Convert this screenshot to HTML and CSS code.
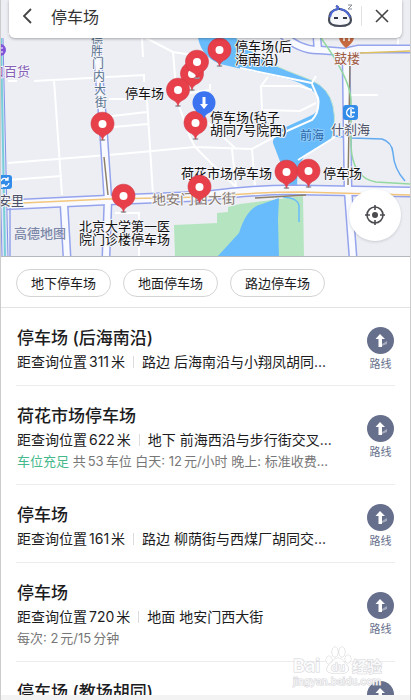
FILE: index.html
```html
<!DOCTYPE html>
<html lang="zh-CN">
<head>
    <meta charset="UTF-8">
    <meta name="viewport" content="width=device-width, initial-scale=1.0">
    <title>停车场</title>
    <link rel="stylesheet" href="styles.css">
</head>
<body>
    <div class="page">
        <div class="map-section">
            <svg class="map" viewBox="0 0 411 256" preserveAspectRatio="xMidYMid slice">
                <defs>
                    <g id="pin">
                        <ellipse cx="0" cy="16" rx="3" ry="1" fill="#9a9aa2"/>
                        <path d="M0 16C-1 12-3 11-6 9.500A11.500 11.500 0 1 1 6 9.500C3 11 1 12 0 16Z" fill="#e8404b" stroke="#cf3541" stroke-width=".6"/>
                        <circle r="4" fill="#fff"/>
                    </g>
                </defs>
                <rect width="411" height="257" fill="#eceef4"/>

                <!-- parks and lakes -->
                <path d="M174 225L217 223V213L228 212V207L240 204L303 196L304 257H175Z" fill="#b5e5c0"/>
                <path d="M217 257L239 233Q247 207 262 204L279 198L278 220L279 257Z" fill="#68bcfc"/>
                <path d="M283 197Q300 198 299 208V222" fill="none" stroke="#68bcfc" stroke-width="1.500"/>
                <path d="M198 38Q202 57 220 64L246 70L288 79Q312 86 319 98Q321 112 310 116L286 127Q272 133 273 143L281 164L290 186H297L298 166L306 154L331 140Q337 126 333 106Q329 88 311 80L288 71Q258 60 236 38Z" fill="#68bcfc"/>
                <path d="M236 38Q258 60 288 71L311 80Q329 88 333 106Q337 126 331 140" fill="none" stroke="#c6e6cf" stroke-width="1"/>
                <path d="M335 136L352 138L382 139Q392 142 393 153Q394 169 405 181" fill="none" stroke="#62aaf0" stroke-width="1.500"/>

                <!-- small streets -->
                <g class="street">
                    <path d="M8 34L20 31M8 81L17 81M34 81L144 75V82M54 80L62 195M142 38L143 57M146 38L173 52L205 57"/>
                    <path d="M173 52L177 100L190 137L195 147L210 162L236 187M8 163L120 154L195 147L252 149L278 135L312 120Q320 112 318 98L312 84"/>
                    <path d="M109 99H145M112 116L147 112M113 127L148 124M147 100L153 195M8 180L62 176M190 93L210 90V84"/>
                    <path d="M240 68L312 83L316 76M268 77L261 86L262 110L300 111L316 103M262 86L300 86L312 90"/>
                    <path d="M232 149L236 187M252 149L255 188M298 160L335 137M398 46V38M378 95L344 95M115 213H139V257M205 120L236 149"/>
                </g>

                <!-- main roads -->
                <g class="road-edge">
                    <path d="M96 38L103 124L108 200L106 257"/>
                    <path d="M64 205L67 257"/>
                    <path d="M346 50L348 190L353 257"/>
                    <path d="M282 34Q300 51 320 50L345 52L358 49L411 49"/>
                    <path d="M317 38L318 50"/>
                    <path class="wide" d="M0 205L108 200L205 196Q260 189 300 190L411 192"/>
                </g>
                <g class="road-fill">
                    <path d="M96 38L103 124L108 200L106 257"/>
                    <path d="M64 205L67 257"/>
                    <path d="M346 50L348 190L353 257"/>
                    <path d="M282 34Q300 51 320 50L345 52L358 49L411 49"/>
                    <path d="M317 38L318 50"/>
                    <path class="wide" d="M0 205L108 200L205 196Q260 189 300 190L411 192"/>
                </g>
                <g fill="none" stroke-width="1.500">
                    <path d="M0 204L108 199L205 197Q260 192 300 192L411 195" stroke="#f2c67c"/>
                    <path d="M360 53L411 51" stroke="#dfc160"/>
                    <path d="M350 60L348 185M104 157L108 195M255 198L306 195" stroke="#8d8068"/>
                    <path d="M321 38Q350 78 351 100V145Q352 178 376 182L411 184" stroke="#93d8a0"/>
                </g>

                <!-- ring road on the left edge -->
                <path d="M0 38L5 257" fill="none" stroke="#8492e6" stroke-width="7"/>
                <path d="M0 38L5 257" fill="none" stroke="#dfe6f7" stroke-width="5"/>
                <path d="M1 38L5 257" fill="none" stroke="#79cfd8" stroke-width="2"/>
                <path d="M10 257V208" fill="none" stroke="#95a3ec" stroke-width="1.500"/>

                <!-- places -->
                <circle cx="0" cy="50" r="6" fill="#8053d8"/>
                <path d="M0 48H3M0 52H3" stroke="#fff"/>
                <text class="place purple" x="-9" y="76">口百货</text>
                <rect x="-2" y="175" width="14" height="14" rx="3" fill="#328ce8"/>
                <path d="M1 181A4 4 0 0 1 8 180M9 183A4 4 0 0 1 2 185M8 177V180H5M2 188V185H5" fill="none" stroke="#fff" stroke-width="1.300"/>
                <text class="place" x="-2" y="205">安里</text>
                <text class="place road-name"><tspan x="91" y="44">德</tspan><tspan x="91" y="56">胜</tspan><tspan x="92" y="68">门</tspan><tspan x="93" y="81">内</tspan><tspan x="94" y="94">大</tspan><tspan x="95" y="107">街</tspan></text>
                <text class="place road-brown" x="152" y="205" transform="rotate(-1 152 205)">地安门西大街</text>
                <path d="M339 38H354Q353 43 346 48Q340 43 339 38Z" fill="#c66a41"/>
                <path d="M344 41V38M349 41V38" stroke="#fff" stroke-width="1.500"/>
                <text class="place brown" x="334" y="63">鼓楼</text>
                <rect x="343" y="105" width="15" height="15" rx="3" fill="#328ce8"/>
                <path d="M354 109A4.500 4.500 0 1 0 354 116M351 109V116M351 112.500H355" fill="none" stroke="#fff" stroke-width="1.500"/>
                <text class="place" x="331" y="134">什刹海</text>
                <text class="place water" x="300" y="140">前海</text>
                <text class="map-brand" x="14" y="238">高德地图</text>

                <!-- parking labels -->
                <g class="parking">
                    <text x="235" y="51">停车场(后</text>
                    <text x="235" y="64">海南沿)</text>
                    <text x="125" y="98">停车场</text>
                    <text x="210" y="122">停车场(毡子</text>
                    <text x="210" y="135">胡同7号院西)</text>
                    <text x="181" y="178">荷花市场停车场</text>
                    <text x="323" y="178">停车场</text>
                    <text x="79" y="231">北京大学第一医</text>
                    <text x="79" y="244">院门诊楼停车场</text>
                </g>

                <use href="#pin" x="219.500" y="50"/>
                <use href="#pin" x="192" y="74"/>
                <use href="#pin" x="197" y="62"/>
                <use href="#pin" x="178" y="90"/>
                <use href="#pin" x="195.500" y="123"/>
                <use href="#pin" x="102.500" y="124"/>
                <use href="#pin" x="123.500" y="196"/>
                <use href="#pin" x="199.500" y="187"/>
                <use href="#pin" x="286.500" y="172"/>
                <use href="#pin" x="308.500" y="171"/>
                <g transform="translate(204 103)">
                    <path d="M0 16C-1 12-3 11-6 9.500A11.500 11.500 0 1 1 6 9.500C3 11 1 12 0 16Z" fill="#3b73f0"/>
                    <path d="M-1.500-6H1.500V1H4L0 6L-4 1H-1.500Z" fill="#fff"/>
                </g>
            </svg>

            <header class="search-bar">
                <button class="icon-button" aria-label="返回">
                    <svg width="12" height="18" viewBox="0 0 12 18"><path d="M10 2L3 9L10 16" fill="none" stroke="#444" stroke-width="1.800"/></svg>
                </button>
                <input class="search-input" type="text" value="停车场" aria-label="搜索">
                <button class="icon-button" aria-label="语音助手">
                    <svg width="28" height="26" viewBox="0 0 28 26">
                        <path d="M12 6Q13 4 10 3M12 6Q3 7 3 17Q3 23 14 23Q25 23 25 17Q24 8 14 6Z" fill="#f7f8fb" stroke="#454a57" stroke-width="2.200"/>
                        <path d="M10 3Q13 4 12 6Q5 7 4 14M14 6Q21 7 24 14" fill="none" stroke="#4c68d6" stroke-width="2"/>
                        <path d="M8 15H12M17 15H21" stroke="#34394a" stroke-width="1.800"/>
                        <path d="M22 2H26L22 6H26" fill="none" stroke="#858994"/>
                    </svg>
                </button>
                <span class="bar-divider"></span>
                <button class="icon-button" aria-label="关闭">
                    <svg width="16" height="16" viewBox="0 0 16 16"><path d="M2 2L14 14M14 2L2 14" stroke="#444" stroke-width="1.600"/></svg>
                </button>
            </header>

            <button class="locate" aria-label="定位">
                <svg width="22" height="22" viewBox="0 0 22 22">
                    <circle cx="11" cy="11" r="8" fill="none" stroke="#4b4b50" stroke-width="1.600"/>
                    <circle cx="11" cy="11" r="3" fill="#4b4b50"/>
                    <path d="M11 1V6M11 16V21M1 11H6M16 11H21" stroke="#4b4b50" stroke-width="1.600"/>
                </svg>
            </button>
        </div>

        <nav class="filters">
            <button class="chip">地下停车场</button>
            <button class="chip">地面停车场</button>
            <button class="chip">路边停车场</button>
        </nav>

        <main class="results">
            <article class="result">
                <div class="info">
                    <h2>停车场 (后海南沿)</h2>
                    <p class="summary"><span>距查询位置<span class="num">311</span>米</span><span class="address">路边 后海南沿与小翔凤胡同...</span></p>
                </div>
                <a href="#" class="route">
                    <svg width="27" height="27" viewBox="0 0 27 27"><circle cx="13.500" cy="13.500" r="13.500" fill="#666f8b"/><path d="M15 17L20 14V17L15 19Z" fill="#a4aabc"/><path d="M13 7L18 12H15V20H11.500V12H8.500Z" fill="#fff"/></svg>
                    <span>路线</span>
                </a>
            </article>
            <article class="result">
                <div class="info">
                    <h2>荷花市场停车场</h2>
                    <p class="summary"><span>距查询位置<span class="num">622</span>米</span><span class="address">地下 前海西沿与步行街交叉...</span></p>
                    <p class="price"><span class="enough">车位充足</span> 共<span class="num">53</span>车位 白天: 12<span class="unit">元/小时</span> 晚上: 标准收费...</p>
                </div>
                <a href="#" class="route">
                    <svg width="27" height="27" viewBox="0 0 27 27"><circle cx="13.500" cy="13.500" r="13.500" fill="#666f8b"/><path d="M15 17L20 14V17L15 19Z" fill="#a4aabc"/><path d="M13 7L18 12H15V20H11.500V12H8.500Z" fill="#fff"/></svg>
                    <span>路线</span>
                </a>
            </article>
            <article class="result">
                <div class="info">
                    <h2>停车场</h2>
                    <p class="summary"><span>距查询位置<span class="num">161</span>米</span><span class="address">路边 柳荫街与西煤厂胡同交...</span></p>
                </div>
                <a href="#" class="route">
                    <svg width="27" height="27" viewBox="0 0 27 27"><circle cx="13.500" cy="13.500" r="13.500" fill="#666f8b"/><path d="M15 17L20 14V17L15 19Z" fill="#a4aabc"/><path d="M13 7L18 12H15V20H11.500V12H8.500Z" fill="#fff"/></svg>
                    <span>路线</span>
                </a>
            </article>
            <article class="result">
                <div class="info">
                    <h2>停车场</h2>
                    <p class="summary"><span>距查询位置<span class="num">720</span>米</span><span class="address">地面 地安门西大街</span></p>
                    <p class="price">每次: 2<span class="unit">元/15</span><span class="unit">分钟</span></p>
                </div>
                <a href="#" class="route">
                    <svg width="27" height="27" viewBox="0 0 27 27"><circle cx="13.500" cy="13.500" r="13.500" fill="#666f8b"/><path d="M15 17L20 14V17L15 19Z" fill="#a4aabc"/><path d="M13 7L18 12H15V20H11.500V12H8.500Z" fill="#fff"/></svg>
                    <span>路线</span>
                </a>
            </article>
            <article class="result">
                <div class="info">
                    <h2>停车场 (教场胡同)</h2>
                    <p class="summary"></p>
                </div>
                <a href="#" class="route" aria-label="路线">
                    <svg width="27" height="27" viewBox="0 0 27 27"><circle cx="13.500" cy="13.500" r="13.500" fill="#666f8b"/><path d="M15 17L20 14V17L15 19Z" fill="#a4aabc"/><path d="M13 7L18 12H15V20H11.500V12H8.500Z" fill="#fff"/></svg>
                </a>
            </article>

            <svg class="watermark" width="92" height="46" viewBox="0 0 92 46">
                <g class="mark">
                    <text class="mark-name" x="1" y="29">Bai</text>
                    <ellipse cx="37" cy="17" rx="3" ry="4"/>
                    <ellipse cx="43" cy="9" rx="3" ry="5"/>
                    <ellipse cx="50" cy="9" rx="3" ry="5"/>
                    <ellipse cx="56" cy="16" rx="3" ry="4"/>
                    <path d="M46 15Q50 15 52 19Q58 24 56 28Q54 31 46 30Q38 31 35 28Q34 23 40 19Q42 15 46 15Z"/>
                    <text class="mark-du" x="39" y="28">du</text>
                    <text class="mark-cn" x="60" y="29">经验</text>
                    <text class="mark-url" x="1" y="42">jingyan.baidu.com</text>
                </g>
            </svg>
        </main>
        <div class="bottom-strip"></div>
    </div>
</body>
</html>
```
FILE: styles.css
```css
* {
    box-sizing: border-box;
}
body {
    margin: 0;
    background: #fff;
    color: #1c1c1e;
    font-family: Inter, "Noto Sans CJK SC", sans-serif;
}
button {
    font-family: inherit;
    color: inherit;
    cursor: pointer;
}
.page {
    display: flex;
    flex-direction: column;
    height: 100vh;
    border-left: 1px solid #ccc;
    border-right: 1px solid #ccc;
    overflow: hidden;
}

/* map */
.map-section {
    position: relative;
    flex: none;
    border-bottom: 1px solid #b4b7be;
}
.map {
    display: block;
    width: 100%;
    height: 256px;
}
.street {
    fill: none;
    stroke: #fff;
    stroke-width: 2px;
}
.road-edge {
    fill: none;
    stroke: #95a3ec;
    stroke-width: 9px;
}
.road-fill {
    fill: none;
    stroke: #f9faff;
    stroke-width: 6px;
}
.road-edge .wide {
    stroke-width: 11px;
}
.road-fill .wide {
    stroke-width: 8px;
}
.place,
.parking {
    font-size: 13px;
    fill: #4c5166;
    stroke: #f4f5f9;
    stroke-width: 2px;
    stroke-linejoin: round;
    paint-order: stroke;
}
.parking {
    fill: #111;
}
.purple {
    fill: #8560b5;
}
.brown {
    fill: #a05b43;
}
.road-name {
    font-size: 12px;
    fill: #566f8c;
}
.road-brown {
    font-size: 14px;
    fill: #85776e;
}
.water {
    font-size: 12px;
    fill: #2c67a8;
    stroke: #8dcbfb;
}
.map-brand {
    font-size: 13px;
    font-weight: 500;
    fill: #7d88a8;
}
.search-bar {
    position: absolute;
    top: 0;
    left: 8px;
    right: 8px;
    display: flex;
    align-items: center;
    height: 38px;
    padding: 0 12px 6px;
    background: #fff;
    border-radius: 0 0 6px 6px;
    box-shadow: 0 1px 3px rgba(0, 0, 0, 0.3);
}
.icon-button {
    display: flex;
    padding: 0;
    border: none;
    background: none;
}
.search-input {
    flex: 1;
    min-width: 0;
    margin-left: 18px;
    padding: 0;
    border: none;
    outline: none;
    font-family: inherit;
    font-size: 16px;
    color: #333;
}
.bar-divider {
    width: 1px;
    height: 20px;
    margin: 0 12px 0 7px;
    background: #e2e2e4;
}
.locate {
    position: absolute;
    right: 9px;
    bottom: 15px;
    display: flex;
    align-items: center;
    justify-content: center;
    width: 52px;
    height: 52px;
    padding: 0;
    border: none;
    border-radius: 50%;
    background: #fff;
    box-shadow: 0 1px 3px rgba(0, 0, 0, 0.15);
}

/* filter chips */
.filters {
    display: flex;
    flex: none;
    gap: 12px;
    padding: 12px 15px 10px;
    border-bottom: 1px solid #e3e3e5;
}
.chip {
    height: 28px;
    padding: 0 14px;
    border: 1px solid #d4d4d6;
    border-radius: 14px;
    background: #fff;
    font-size: 13px;
    line-height: 20px;
}

/* results */
.results {
    position: relative;
    flex: 1;
    min-height: 0;
    overflow: hidden;
}
.result {
    display: flex;
    align-items: center;
    justify-content: space-between;
    margin: 0 15px;
    padding: 17px 0 12px;
    border-bottom: 1px solid #ececee;
}
.info {
    padding-left: 1px;
    white-space: nowrap;
}
.info h2 {
    margin: 0;
    font-size: 17px;
    font-weight: 500;
    line-height: 26px;
}
.summary {
    display: flex;
    align-items: center;
    height: 22px;
    margin: 0;
    font-size: 14px;
    line-height: 22px;
}
.num {
    margin: 0 2px;
}
.unit {
    margin-left: 2px;
}
.address {
    display: flex;
    align-items: center;
}
.address::before {
    content: "";
    width: 1px;
    height: 12px;
    margin: 0 8px;
    background: #dcdcde;
}
.price {
    margin: 0;
    font-size: 13px;
    line-height: 21px;
    color: #777;
}
.enough {
    color: #45b98c;
}
.route {
    display: flex;
    flex-direction: column;
    align-items: center;
    gap: 2px;
    width: 29px;
    min-height: 45px;
    color: #666f8b;
    font-size: 11px;
    line-height: 16px;
    text-decoration: none;
}
.bottom-strip {
    flex: none;
    height: 5px;
    background: #f3f3f4;
}

/* watermark over the last rows */
.watermark {
    position: absolute;
    right: 26px;
    bottom: 6px;
    pointer-events: none;
}
.mark {
    fill: #fff;
    fill-opacity: 0.8;
    stroke: #d4d4d8;
    stroke-width: 1px;
    paint-order: stroke;
    font-weight: 700;
}
.mark-name {
    font-size: 18px;
}
.mark-du {
    font-size: 11px;
}
.mark-cn {
    font-size: 15px;
}
.mark-url {
    font-size: 10px;
    font-weight: 500;
}
```
